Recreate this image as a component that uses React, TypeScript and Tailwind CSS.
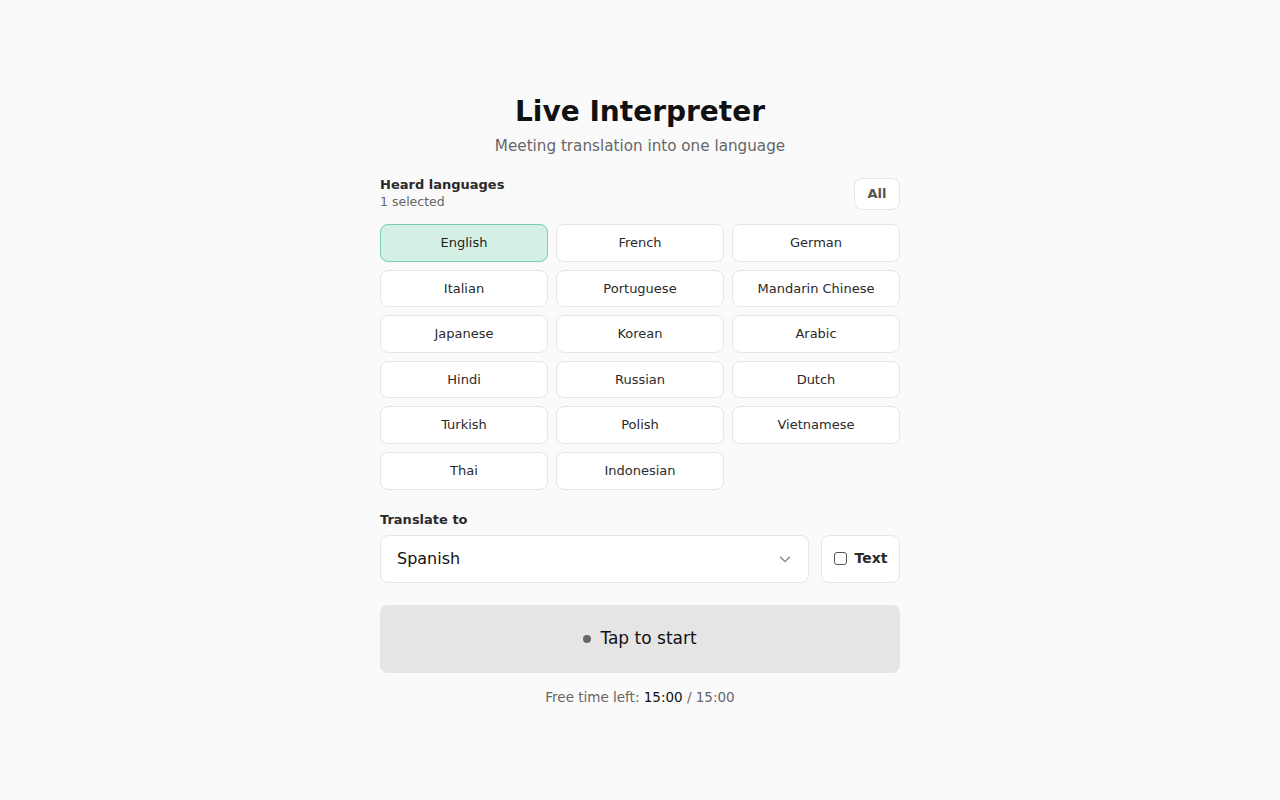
import React, { useState } from "react";

const LANGS = [
  "English","French","German","Italian","Portuguese","Mandarin Chinese","Japanese","Korean","Arabic","Hindi","Russian","Dutch","Turkish","Polish","Vietnamese","Thai","Indonesian",
];

export default function App() {
  const [sel, setSel] = useState<string[]>(["English"]);
  const toggle = (l: string) =>
    setSel((s) => (s.includes(l) ? s.filter((x) => x !== l) : [...s, l]));
  return (
    <div className="min-h-screen w-full bg-[#fafafa] text-[#1a1a1a]" style={{ fontFamily: '"DejaVu Sans", sans-serif' }}>
      <div className="mx-auto w-[520px] pt-[94px]">
        <h1 className="text-center text-[28px] font-bold leading-[36px] text-[#111]">Live Interpreter</h1>
        <p className="mt-[6px] text-center text-[15.2px] leading-[20px] text-[#666]">Meeting translation into one language</p>

        <div className="mt-[20px] flex items-start justify-between">
          <div>
            <div className="text-[13px] font-bold leading-[17px] text-[#2a2a2a]">Heard languages</div>
            <div className="mt-[1px] text-[12.5px] leading-[16px] text-[#666]">1 selected</div>
          </div>
          <button className="mt-[2px] h-[32px] w-[46px] rounded-[8px] border border-[#e6e6e6] bg-white text-[13px] font-bold text-[#555]">All</button>
        </div>

        <div className="mt-[14px] grid grid-cols-3 gap-x-[8px] gap-y-[8px]">
          {LANGS.map((l) => {
            const on = sel.includes(l);
            return (
              <button
                key={l}
                onClick={() => toggle(l)}
                className={
                  on
                    ? "h-[37.6px] rounded-[8px] border border-[#76cfae] bg-[#d4f0e5] text-[13px] text-[#1f1f1f]"
                    : "h-[37.6px] rounded-[8px] border border-[#e6e6e6] bg-white text-[13px] text-[#2a2a2a]"
                }
              >
                {l}
              </button>
            );
          })}
        </div>

        <div className="mt-[21px] text-[13px] font-bold leading-[17px] text-[#2a2a2a]">Translate to</div>
        <div className="mt-[7px] flex gap-[12px]">
          <div className="flex h-[48px] flex-1 items-center justify-between rounded-[8px] border border-[#e6e6e6] bg-white pl-[16px] pr-[15px]">
            <span className="text-[16px] text-[#111]">Spanish</span>
            <svg width="16" height="16" viewBox="0 0 24 24" fill="none" stroke="#777" strokeWidth="1.6" strokeLinecap="round" strokeLinejoin="round">
              <path d="M5 9l7 7 7-7" />
            </svg>
          </div>
          <label className="flex h-[48px] w-[79px] items-center justify-center gap-[8px] rounded-[8px] border border-[#e6e6e6] bg-white">
            <span className="h-[13px] w-[13px] rounded-[3px] border border-[#555] bg-white" />
            <span className="text-[14px] font-bold text-[#2a2a2a]">Text</span>
          </label>
        </div>

        <button className="mt-[22px] flex h-[68px] w-full items-center justify-center gap-[9px] rounded-[8px] bg-[#e5e5e5]">
          <span className="h-[8px] w-[8px] rounded-full bg-[#666]" />
          <span className="text-[17px] text-[#111]">Tap to start</span>
        </button>

        <div className="mt-[14px] text-center text-[13.5px] text-[#666]">
          Free time left: <span className="text-[#111]">15:00</span> / 15:00
        </div>
      </div>
    </div>
  );
}
